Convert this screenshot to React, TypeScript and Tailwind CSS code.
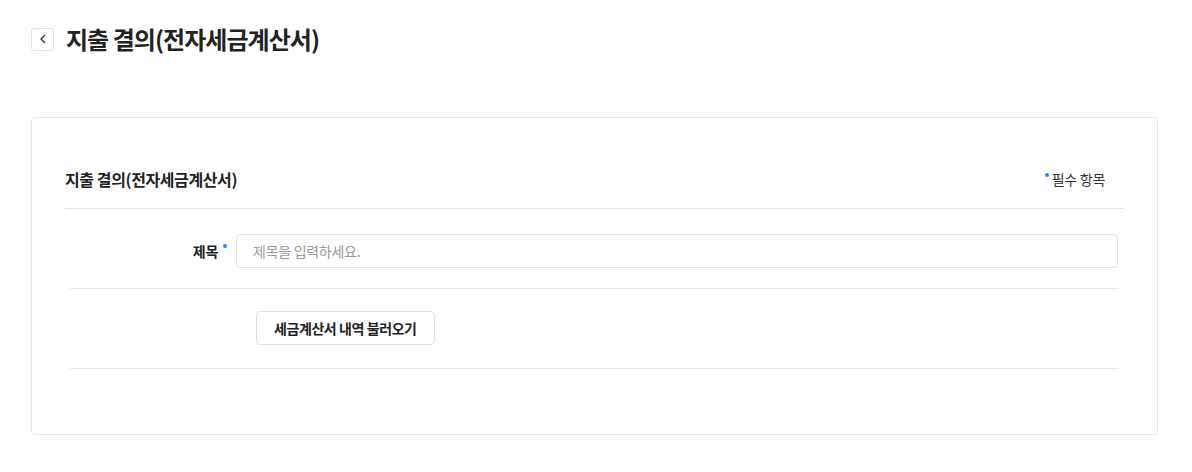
import React from "react";

const font = { fontFamily: '"Noto Sans CJK KR", "Noto Sans", sans-serif' };

function RequiredDot({ className }: { className?: string }) {
  return <span className={"block h-[4px] w-[4px] shrink-0 rounded-full bg-[#1a8cff] " + (className ?? "")} />;
}

export default function App() {
  return (
    <div
      className="min-h-screen bg-white pl-[31px] pr-[34px] pt-[27px] text-[#222]"
      style={font}
    >
      <header className="flex items-center gap-3">
        <button className="flex h-[23px] w-[23px] items-center justify-center rounded-[3px] border border-[#e3e3e3] bg-white text-[#333]">
          <svg width="12" height="12" viewBox="0 0 12 12" fill="none">
            <path d="M7.5 2.5 4 6l3.5 3.5" stroke="currentColor" strokeWidth="1.4" strokeLinecap="round" strokeLinejoin="round" />
          </svg>
        </button>
        <h1 className="text-[24px] font-bold leading-[24px] tracking-[-0.04em]">지출 결의(전자세금계산서)</h1>
      </header>

      <section className="mt-[66px] rounded-[4px] border border-[#e8e8e8] bg-white px-[33px] pb-[65px] pt-[49px]">
        <div className="flex items-center justify-between border-b border-[#e3e3e3] pb-[17px]">
          <h2 className="text-[16px] font-bold leading-[24px] tracking-[-0.025em]">지출 결의(전자세금계산서)</h2>
          <div className="mr-[19px] flex items-start gap-[3px] text-[14px] leading-[20px] tracking-[-0.02em] text-[#333]">
            <RequiredDot className="mt-[4px]" />
            <span>필수 항목</span>
          </div>
        </div>

        <div className="ml-[5px] mr-[6px]">
          <div className="flex items-center border-b border-[#e8e8e8] pb-[20px] pt-[25px]">
            <div className="flex w-[166px] shrink-0 items-start justify-end gap-[5px] pr-[9px]">
              <span className="text-[14px] font-bold leading-[20px] tracking-[-0.02em]">제목</span>
              <RequiredDot className="mt-[3px]" />
            </div>
            <input
              className="h-[34px] flex-1 rounded-[4px] border border-[#e3e3e3] px-4 text-[14px] tracking-[-0.02em] text-[#222] outline-none placeholder:text-[#9a9a9a]"
              placeholder="제목을 입력하세요."
            />
          </div>

          <div className="flex items-center border-b border-[#e8e8e8] pb-[23px] pt-[22px]">
            <div className="w-[166px] shrink-0" />
            <div className="pl-5">
              <button className="h-[34px] rounded-[4px] border border-[#e0e0e0] bg-white px-[17px] text-[14px] font-semibold tracking-[-0.03em] text-[#222]">
                세금계산서 내역 불러오기
              </button>
            </div>
          </div>
        </div>
      </section>
    </div>
  );
}
